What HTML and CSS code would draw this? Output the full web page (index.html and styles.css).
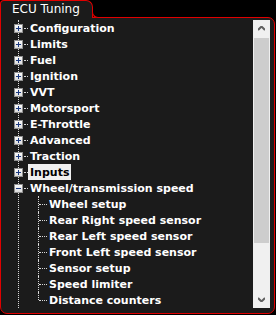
FILE: index.html
```html
<!DOCTYPE html>
<html lang="en">
<head>
  <meta charset="UTF-8">
  <title>ECU Tuning</title>
  <link rel="stylesheet" href="styles.css">
</head>
<body>
  <div class="tab">ECU Tuning</div>
  <div class="panel">
    <div class="tree">
      <ul class="root">
        <li><span class="box plus"></span><span class="dash"></span><span class="label">Configuration</span></li>
        <li><span class="box plus"></span><span class="dash"></span><span class="label">Limits</span></li>
        <li><span class="box plus"></span><span class="dash"></span><span class="label">Fuel</span></li>
        <li><span class="box plus"></span><span class="dash"></span><span class="label">Ignition</span></li>
        <li><span class="box plus"></span><span class="dash"></span><span class="label">VVT</span></li>
        <li><span class="box plus"></span><span class="dash"></span><span class="label">Motorsport</span></li>
        <li><span class="box plus"></span><span class="dash"></span><span class="label">E-Throttle</span></li>
        <li><span class="box plus"></span><span class="dash"></span><span class="label">Advanced</span></li>
        <li><span class="box plus"></span><span class="dash"></span><span class="label">Traction</span></li>
        <li><span class="box plus"></span><span class="dash"></span><span class="label selected">Inputs</span></li>
        <li><span class="box minus"></span><span class="dash"></span><span class="label">Wheel/transmission speed</span></li>
        <li class="open">
          <ul class="children">
            <li><span class="label">Wheel setup</span></li>
            <li><span class="label">Rear Right speed sensor</span></li>
            <li><span class="label">Rear Left speed sensor</span></li>
            <li><span class="label">Front Left speed sensor</span></li>
            <li><span class="label">Sensor setup</span></li>
            <li><span class="label">Speed limiter</span></li>
            <li><span class="label">Distance counters</span></li>
          </ul>
        </li>
      </ul>
    </div>
    <div class="scrollbar">
      <div class="arrow">
        <svg width="7" height="5" viewBox="0 0 7 5"><path d="M0 4 L3.5 0.5 L7 4" fill="none" stroke="#606060" stroke-width="2"/></svg>
      </div>
      <div class="track"><div class="thumb"></div></div>
      <div class="arrow">
        <svg width="7" height="5" viewBox="0 0 7 5"><path d="M0 1 L3.5 4.5 L7 1" fill="none" stroke="#606060" stroke-width="2"/></svg>
      </div>
    </div>
  </div>
</body>
</html>
```

FILE: styles.css
```css
body {
  margin: 0;
  width: 276px;
  height: 315px;
  overflow: hidden;
  background: #000;
  font-family: "DejaVu Sans", sans-serif;
}
.tab {
  position: relative;
  z-index: 1;
  width: 93px;
  height: 18px;
  box-sizing: border-box;
  margin-bottom: -1px;
  padding-left: 11px;
  border: 1px solid #e00000;
  border-bottom: none;
  border-radius: 4px 7px 0 0;
  background: #1b1b1b;
  color: #fff;
  font-size: 12px;
  line-height: 17px;
}
.tab::after {
  content: "";
  position: absolute;
  left: 91px;
  bottom: 0;
  width: 6px;
  height: 6px;
  border-left: 1px solid #e00000;
  border-bottom: 1px solid #e00000;
  border-bottom-left-radius: 6px;
  background: #000;
}
.panel {
  display: flex;
  width: 275px;
  height: 297px;
  box-sizing: border-box;
  padding: 2px 4px 5px 0;
  border: 1px solid #e00000;
  border-radius: 0 7px 7px 7px;
  background: #1b1b1b;
}
.tree {
  flex: 1;
  overflow: hidden;
}
ul {
  list-style: none;
  margin: 0;
  padding: 0;
}
.root {
  position: relative;
  padding-bottom: 8px;
}
.root::before {
  content: "";
  position: absolute;
  left: 17px;
  top: 0;
  bottom: 0;
  border-left: 1px dotted #d8d8d8;
}
.root > li {
  display: flex;
  align-items: center;
  height: 16px;
  position: relative;
}
.root > li.open {
  display: block;
  height: auto;
}
.box {
  position: relative;
  width: 9px;
  height: 9px;
  box-sizing: border-box;
  margin-left: 13px;
  border: 1px solid #909090;
  background: linear-gradient(#fafafa, #dcdcdc);
}
.box::before {
  content: "";
  position: absolute;
  left: 1px;
  top: 3px;
  width: 5px;
  height: 1px;
  background: #1c3a80;
}
.box.plus::after {
  content: "";
  position: absolute;
  left: 3px;
  top: 1px;
  width: 1px;
  height: 5px;
  background: #1c3a80;
}
.dash {
  width: 4px;
  margin-left: 1px;
  border-top: 1px dotted #d8d8d8;
}
.label {
  padding: 0 2px;
  height: 16px;
  line-height: 17px;
  color: #fff;
  font-size: 11px;
  font-weight: bold;
  white-space: nowrap;
}
.label.selected {
  background: #f0f0f0;
  color: #000;
}
.children > li {
  position: relative;
  height: 16px;
  padding-left: 46px;
  display: flex;
  align-items: center;
}
.children > li::before {
  content: "";
  position: absolute;
  left: 37px;
  top: 0;
  height: 16px;
  border-left: 1px dotted #d8d8d8;
}
.children > li:last-child::before {
  height: 8px;
}
.children > li::after {
  content: "";
  position: absolute;
  left: 38px;
  top: 8px;
  width: 8px;
  border-top: 1px dotted #d8d8d8;
}
.scrollbar {
  width: 17px;
  display: flex;
  flex-direction: column;
  background: #f0f0f0;
}
.arrow {
  height: 17px;
  display: flex;
  align-items: center;
  justify-content: center;
}
.track {
  flex: 1;
  padding: 1px 1px 0;
}
.thumb {
  height: 205px;
  background: #cdcdcd;
}
```
